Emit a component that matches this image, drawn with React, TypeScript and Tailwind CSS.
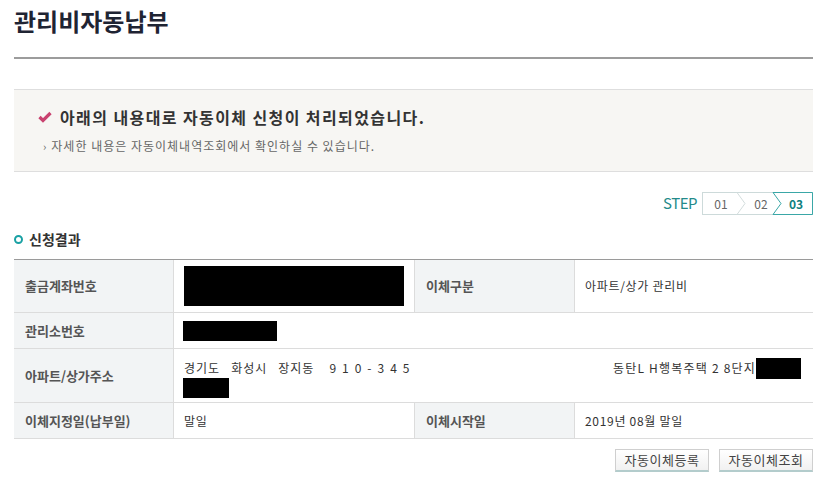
import React from "react";

const font = { fontFamily: '"Noto Sans CJK KR", "Noto Sans", sans-serif' };

function Label({ children, h }: { children: React.ReactNode; h?: string }) {
  return (
    <div className={`${h ?? ""} bg-[#f2f4f5] border-b border-r border-[#dcdcdc] flex items-center pl-[11px] text-[13px] font-bold text-[#555]`}>
      {children}
    </div>
  );
}

function Value({ children, last }: { children: React.ReactNode; last?: boolean }) {
  return (
    <div className={`border-b border-[#dcdcdc] ${last ? "" : "border-r"} flex items-center pl-[10px] text-[12px] tracking-[0.7px] text-[#333]`}>
      {children}
    </div>
  );
}

function Redact({ w, h }: { w: number; h: number }) {
  return <span className="inline-block bg-black" style={{ width: w, height: h }} />;
}

function Steps() {
  return (
    <div className="relative w-[111px] h-[23px]">
      <svg className="absolute inset-0" width="111" height="23" viewBox="0 0 111 23">
        <rect x="0.5" y="0.5" width="110" height="22" fill="#fff" stroke="#cddada" />
        <path d="M35 0.5 L43 11.5 L35 22.5" fill="none" stroke="#d4dddd" />
        <path d="M71 0.5 H110.5 V22.5 H71 L79 11.5 Z" fill="#fff" stroke="#3aa7a7" />
      </svg>
      <div className="relative flex h-full items-center text-[12px] text-[#666]">
        <span className="w-[38px] text-center">01</span>
        <span className="w-[42px] text-center">02</span>
        <span className="w-[28px] text-center font-bold text-[#0f7f80]">03</span>
      </div>
    </div>
  );
}

export default function App() {
  return (
    <div className="w-[832px] h-[489px] bg-white" style={font}>
      <div className="ml-[14px] w-[799px]">
        {/* Title */}
        <div className="h-[59px] border-b-2 border-[#9c9c9c] pt-[4px]">
          <h1 className="text-[24px] font-bold text-[#1f2433] leading-[34px]">관리비자동납부</h1>
        </div>

        {/* Result box */}
        <div className="mt-[30px] h-[83px] bg-[#f7f6f3] border-t border-b border-[#dedede] pl-[24px] pt-[15px]">
          <div className="flex items-center gap-[8px]">
            <svg width="14" height="12" viewBox="0 0 14 12">
              <path d="M1.5 6 L5 9.5 L12.5 2" fill="none" stroke="#c9426f" strokeWidth="3.2" />
            </svg>
            <span className="text-[16px] font-bold text-[#333] leading-[24px] tracking-[1.4px]">
              아래의 내용대로 자동이체 신청이 처리되었습니다.
            </span>
          </div>
          <div className="mt-[8px] flex items-center pl-[5px] text-[12px] text-[#666]">
            <span className="mr-[5px] text-[11px]">›</span>
            <span className="tracking-[1px]">자세한 내용은 자동이체내역조회에서 확인하실 수 있습니다.</span>
          </div>
        </div>

        {/* Step */}
        <div className="mt-[20px] flex items-center justify-end gap-[5px]">
          <span className="text-[15px] text-[#238a8a] tracking-[-0.5px]">STEP</span>
          <Steps />
        </div>

        {/* Section title */}
        <div className="mt-[13px] flex items-center gap-[6px] h-[22px]">
          <span className="inline-block w-[9px] h-[9px] rounded-full border-[2.5px] border-[#1aa1a4]" />
          <span className="text-[14px] font-bold text-[#333]">신청결과</span>
        </div>

        {/* Table */}
        <div className="mt-[9px] border-t border-[#9a9a9a] grid grid-cols-[160px_241px_160px_238px]">
          <Label h="h-[53px]">출금계좌번호</Label>
          <Value>
            <Redact w={220} h={40} />
          </Value>
          <Label>이체구분</Label>
          <Value last>아파트/상가 관리비</Value>

          <Label h="h-[36px]">관리소번호</Label>
          <div className="col-span-3 border-b border-[#dcdcdc] flex items-center pl-[9px]">
            <Redact w={94} h={20} />
          </div>

          <Label h="h-[54px]">아파트/상가주소</Label>
          <div className="col-span-3 border-b border-[#dcdcdc] pl-[10px] pr-[12px] pt-[9px] text-[12px] text-[#333]">
            <div className="flex items-center justify-between h-[20px]">
              <span className="flex items-center gap-[11px] tracking-[1px]">
                <span>경기도</span>
                <span>화성시</span>
                <span>장지동</span>
                <span className="ml-[4px] tracking-[6px]">910-345</span>
              </span>
              <span className="flex items-center tracking-[1.2px]">
                동탄L H행복주택 2 8단지
                <Redact w={45} h={21} />
              </span>
            </div>
            <div className="-ml-px">
              <Redact w={46} h={20} />
            </div>
          </div>

          <Label h="h-[36px]">이체지정일(납부일)</Label>
          <Value>말일</Value>
          <Label>이체시작일</Label>
          <Value last>2019년 08월 말일</Value>
        </div>
        <div className="border-t border-[#9a9a9a] -mt-px" />

        {/* Buttons */}
        <div className="mt-[10px] flex justify-end gap-[10px]">
          <button className="w-[94px] h-[23px] border border-[#cfcfcf] border-b-[#b3cccc] border-b-2 bg-gradient-to-b from-white to-[#f1f1f1] text-[13px] tracking-[0.5px] text-[#444]">
            자동이체등록
          </button>
          <button className="w-[94px] h-[23px] border border-[#cfcfcf] border-b-[#b3cccc] border-b-2 bg-gradient-to-b from-white to-[#f1f1f1] text-[13px] tracking-[0.5px] text-[#444]">
            자동이체조회
          </button>
        </div>
      </div>
    </div>
  );
}
